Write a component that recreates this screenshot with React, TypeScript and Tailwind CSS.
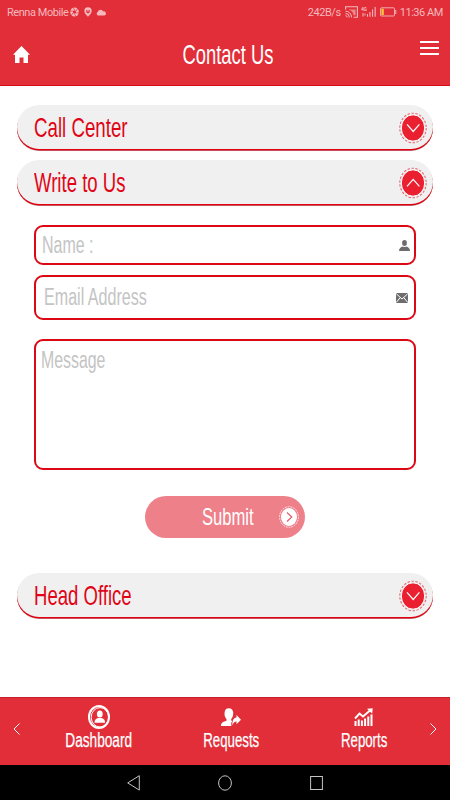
import React from "react";

interface SectionBarProps {
    title: string;
    titleClass: string;
    open?: boolean;
}

const ToggleBadge: React.FC<{ open: boolean }> = ({ open }) => (
    <svg className="h-8 w-7 shrink-0" viewBox="0 0 28 32" fill="none">
        <ellipse cx="14" cy="16" rx="13.2" ry="14.8" stroke="#e26a75" strokeWidth="1.1" strokeDasharray="2.4 1.6" />
        <ellipse cx="14" cy="16" rx="11.7" ry="13.2" fill="#ea2030" stroke="#fff" strokeWidth="1" />
        <path d={open ? "M8 19.3 14.2 12.3 20.4 19.3" : "M8 12.3 14.2 19.5 20.4 12.3"} stroke="#fff" strokeWidth="1.2" />
    </svg>
);

const SectionBar: React.FC<SectionBarProps> = ({ title, titleClass, open = false }) => (
    <button className="flex h-11 w-full items-center justify-between rounded-full bg-[#f0f0f0] pt-[2px] pl-[17px] pr-[6px] shadow-[0_1.5px_0_0_#e0000f,0_2px_0_0_#b9a0a0]">
        <span className={`origin-left whitespace-nowrap text-[27.5px] leading-none text-[#e00516] ${titleClass}`}>{title}</span>
        <ToggleBadge open={open} />
    </button>
);

const StatusBar: React.FC = () => (
    <div className="flex h-6 items-center justify-between pl-[7px] pr-[7px] font-['Roboto',sans-serif] text-[11px] leading-none tracking-[-0.45px] text-[#f5b9bd]">
        <div className="flex items-center">
            <span className="w-[63px] whitespace-nowrap">Renna Mobile</span>
            <svg className="h-[10px] w-[9px]" viewBox="0 0 9 10">
                <ellipse cx="4.5" cy="5" rx="4.3" ry="4.6" fill="currentColor" />
                <path d="M4.5 3 3.2 0M6.2 4 7.6 1.2M6.2 6 9 5.8M4.6 7.1 6 10M2.8 6 1.2 8.8M2.8 4 0 4.2" stroke="#e12e39" strokeWidth=".7" />
                <circle cx="4.5" cy="5" r="1.7" fill="#e12e39" />
            </svg>
            <svg className="ml-[5px] h-[10px] w-2" viewBox="0 0 8 10">
                <path d="M4 .3a3.7 3.7 0 0 0-3.7 3.8C.3 6.6 4 9.8 4 9.8s3.7-3.2 3.7-5.7A3.7 3.7 0 0 0 4 .3Z" fill="currentColor" />
                <path d="M2.2 3.2h3.6v1.4a1.8 1.8 0 0 1-3.6 0Z" fill="#e12e39" />
                <circle cx="4" cy="4" r=".7" fill="currentColor" />
            </svg>
            <svg className="ml-[4px] h-[7px] w-[10px]" viewBox="0 0 10 7">
                <path d="M2 6.5a1.900 1.900 0 0 1-.3-3.500 3 3 0 0 1 5.600-.6 2.100 2.100 0 0 1 1 4.100Z" fill="currentColor" />
            </svg>
        </div>
        <div className="flex items-center">
            <span className="whitespace-nowrap">242B/s</span>
            <svg className="ml-1 h-3 w-[13px]" viewBox="0 0 13 12" fill="none" stroke="currentColor">
                <path d="M4 3.4h6.6v5.8H8.5C8 6 6.5 4.6 4 4Z" fill="currentColor" stroke="none" opacity=".65" />
                <path d="M.6 3.4V.7h11.8v10.6H8.6" strokeWidth="1.1" />
                <path d="M.5 5.2a6 6 0 0 1 6 6.2M.5 7.4a4 4 0 0 1 3.9 4M.5 9.6a1.8 1.8 0 0 1 1.7 1.8" strokeWidth="1" />
            </svg>
            <svg className="ml-[3px] h-3 w-4" viewBox="0 0 16 12" fill="currentColor">
                <text x="0" y="4.6" fontSize="5" fontWeight="700">4G</text>
                <path d="M1.5 7h1v3.5h-1zM3.5 7.5h1v2h-1zM6 8h1v2.7H6zM8.4 6h1.1v4.7H8.4zM11 3.5h1.1v7.2H11zM13.6 1h1.1v9.7h-1.1z" />
            </svg>
            <svg className="ml-[3px] h-[10px] w-[17px]" viewBox="0 0 17 10" fill="none">
                <rect x=".5" y=".8" width="14" height="8.2" rx="1" stroke="currentColor" strokeWidth=".9" />
                <path d="M1.4 1.7h2.4v6.4H1.4z" fill="#ffc531" />
                <path d="M15.8 3v4" stroke="currentColor" />
            </svg>
            <span className="ml-[3px] whitespace-nowrap">11:36 AM</span>
        </div>
    </div>
);

const Header: React.FC = () => (
    <header className="h-[86px] border-b border-[#d70c18] bg-[#e12e39]">
        <StatusBar />
        <div className="flex h-[61px] items-center justify-between pl-[13px] pr-[11px]">
            <svg className="h-[17px] w-[17px]" viewBox="0 0 17 17">
                <path d="M8.5 0 17 8.7h-2V17h-4.5v-5.4h-4V17H2V8.7H0Z" fill="#fff" />
            </svg>
            <h1 className="ml-[6px] scale-x-[0.67] whitespace-nowrap text-[27.5px] leading-none text-white">Contact Us</h1>
            <div className="mb-[13px] flex w-[19px] flex-col gap-1">
                <span className="h-0.5 bg-white" />
                <span className="h-0.5 bg-white" />
                <span className="h-0.5 bg-white" />
            </div>
        </div>
    </header>
);

const ContactForm: React.FC = () => (
    <form className="flex flex-col px-[17px] pt-[21px] text-[23.5px] leading-none text-[#c4c4c4]">
        <label className="flex h-10 items-center justify-between rounded-[9px] border-2 border-[#dc0814] pt-px pl-[6px] pr-[4px]">
            <span className="origin-left scale-x-[0.68] whitespace-nowrap">Name :</span>
            <svg className="h-[11px] w-[11px]" viewBox="0 0 11 11" fill="#6d6d6d">
                <ellipse cx="5.5" cy="3" rx="2.4" ry="3" />
                <path d="M0 11C0 8 1.7 7 4 6.4q1.5 1 3 0C9.3 7 11 8 11 11Z" />
            </svg>
        </label>
        <label className="mt-[10px] flex h-[45px] items-center justify-between rounded-[9px] border-2 border-[#dc0814] pt-px pl-[8px] pr-[6px]">
            <span className="origin-left scale-x-[0.685] whitespace-nowrap">Email Address</span>
            <svg className="h-[10px] w-3" viewBox="0 0 12 10">
                <rect width="12" height="10" rx="1" fill="#6d6d6d" />
                <path d="M.3.8 6 6l5.700-5.200M.3 9.300l3.900-4.600M11.700 9.300 7.800 4.700" fill="none" stroke="#fff" strokeWidth="1" />
            </svg>
        </label>
        <label className="mt-[19px] flex h-[131px] items-start rounded-[9px] border-2 border-[#dc0814] pl-[5px] pt-[8px]">
            <span className="origin-left scale-x-[0.675] whitespace-nowrap">Message</span>
        </label>
        <button
            type="button"
            className="mt-[26px] ml-[111px] flex h-[42px] w-[160px] items-center justify-between rounded-full bg-[#ee808a] pl-[57px] pr-[6px] text-2xl leading-none text-white"
        >
            <span className="w-13 origin-left scale-x-[0.69] whitespace-nowrap">Submit</span>
            <svg className="h-[22px] w-5 shrink-0" viewBox="0 0 20 22" fill="none">
                <ellipse cx="10" cy="11" rx="9.4" ry="10.3" stroke="#fff" strokeWidth=".8" strokeDasharray="1.8 1" />
                <ellipse cx="10" cy="11" rx="8" ry="9" fill="#fff" />
                <path d="M8 6.5 12.8 11 8 15.5" stroke="#df5965" strokeWidth="1.1" />
            </svg>
        </button>
    </form>
);

const BottomTabs: React.FC = () => (
    <nav className="flex h-[68px] items-start border-t border-[#c61f2b] bg-[#e12e39] px-[13px] text-[19.5px] leading-none text-white [-webkit-text-stroke:0.25px_white]">
        <svg className="mt-[25px] h-3 w-[7px] shrink-0" viewBox="0 0 7 12" fill="none" stroke="#fff">
            <path d="M6.5.5 1 6l5.5 5.5" />
        </svg>
        <div className="ml-[13px] grid w-[397px] shrink-0 grid-cols-3">
            <div className="flex flex-col items-center pt-[7px]">
                <svg className="h-6 w-[22px]" viewBox="0 0 22 24">
                    <ellipse cx="11" cy="12" rx="10" ry="10.9" fill="none" stroke="#fff" strokeWidth="2" />
                    <ellipse cx="12" cy="12.3" rx="8.800" ry="9.700" fill="none" stroke="#fff" strokeWidth="1" />
                    <ellipse cx="11.8" cy="9" rx="2.9" ry="3.6" fill="#fff" />
                    <path d="M6.5 17.8c0-3 1.5-4.3 3.8-4.8h3c2.3.5 3.8 1.8 3.8 4.8Z" fill="#fff" />
                </svg>
                <span className="mt-[2px] scale-x-[0.7] whitespace-nowrap">Dashboard</span>
            </div>
            <div className="flex flex-col items-center pt-[10px]">
                <svg className="h-[18px] w-5" viewBox="0 0 20 18" fill="#fff">
                    <path d="M0 18c0-3.4 2-4 5.5-5.2V11C3.6 9 3.4 7 3.6 4.5 3.8 1.6 5.3.2 7.8.2S12 1.6 12.2 4.5C12.3 7 12 9 10.200 11v1.6l1 .5C10 15 10 16.5 10.5 18Z" />
                    <path d="M11.5 17.5c-.5-5 1-7.5 4-8V7l4.500 4.700-4.500 4.500v-2.700c-2 0-3.200 1-4 4Z" />
                </svg>
                <span className="mt-[5px] scale-x-[0.68] whitespace-nowrap">Requests</span>
            </div>
            <div className="flex flex-col items-center pt-[10px]">
                <svg className="h-[18px] w-[19px]" viewBox="0 0 19 18" fill="#fff">
                    <path d="M.5 13h2v5h-2zM3.7 11.5h2V18h-2zM6.9 12.5h2V18h-2zM10.1 10.5h2V18h-2zM13.3 8.5h2V18h-2zM16.5 6.5h2V18h-2z" />
                    <path d="M1 10.5 5.5 5.5 9 8.5 16 2.5" fill="none" stroke="#fff" strokeWidth="1.9" />
                    <path d="m13 .8 5.700-.6-.5 5.600Z" />
                </svg>
                <span className="mt-[5px] scale-x-[0.68] whitespace-nowrap">Reports</span>
            </div>
        </div>
        <svg className="mt-[25px] h-3 w-[7px] shrink-0" viewBox="0 0 7 12" fill="none" stroke="#fff">
            <path d="M.5.5 6 6 .5 11.5" />
        </svg>
    </nav>
);

const SystemNav: React.FC = () => (
    <div className="flex h-[35px] items-center justify-center gap-[78px] bg-black">
        <svg className="h-4 w-[13px]" viewBox="0 0 13 16" fill="none" stroke="#c4c4c4" strokeLinejoin="round">
            <path d="M12.3.7v14.400L.7 7.900Z" />
        </svg>
        <svg className="h-4 w-[14px]" viewBox="0 0 14 16" fill="none" stroke="#c4c4c4">
            <ellipse cx="7" cy="8" rx="6.4" ry="7.2" />
        </svg>
        <svg className="h-4 w-[13px]" viewBox="0 0 13 16" fill="none" stroke="#c4c4c4">
            <rect x=".6" y="1.5" width="11.8" height="13" />
        </svg>
    </div>
);

const App: React.FC = () => {
    return (
        <div className="flex h-[800px] w-[450px] flex-col overflow-hidden bg-white font-['Liberation_Sans',sans-serif]">
            <Header />
            <main className="flex flex-1 flex-col px-[17px] pt-[19px]">
                <SectionBar title="Call Center" titleClass="scale-x-[0.68]" />
                <div className="mt-[11px]">
                    <SectionBar title="Write to Us" titleClass="scale-x-[0.675]" open />
                </div>
                <ContactForm />
                <div className="mt-[35px]">
                    <SectionBar title="Head Office" titleClass="scale-x-[0.675]" />
                </div>
            </main>
            <BottomTabs />
            <SystemNav />
        </div>
    );
};

export default App;
